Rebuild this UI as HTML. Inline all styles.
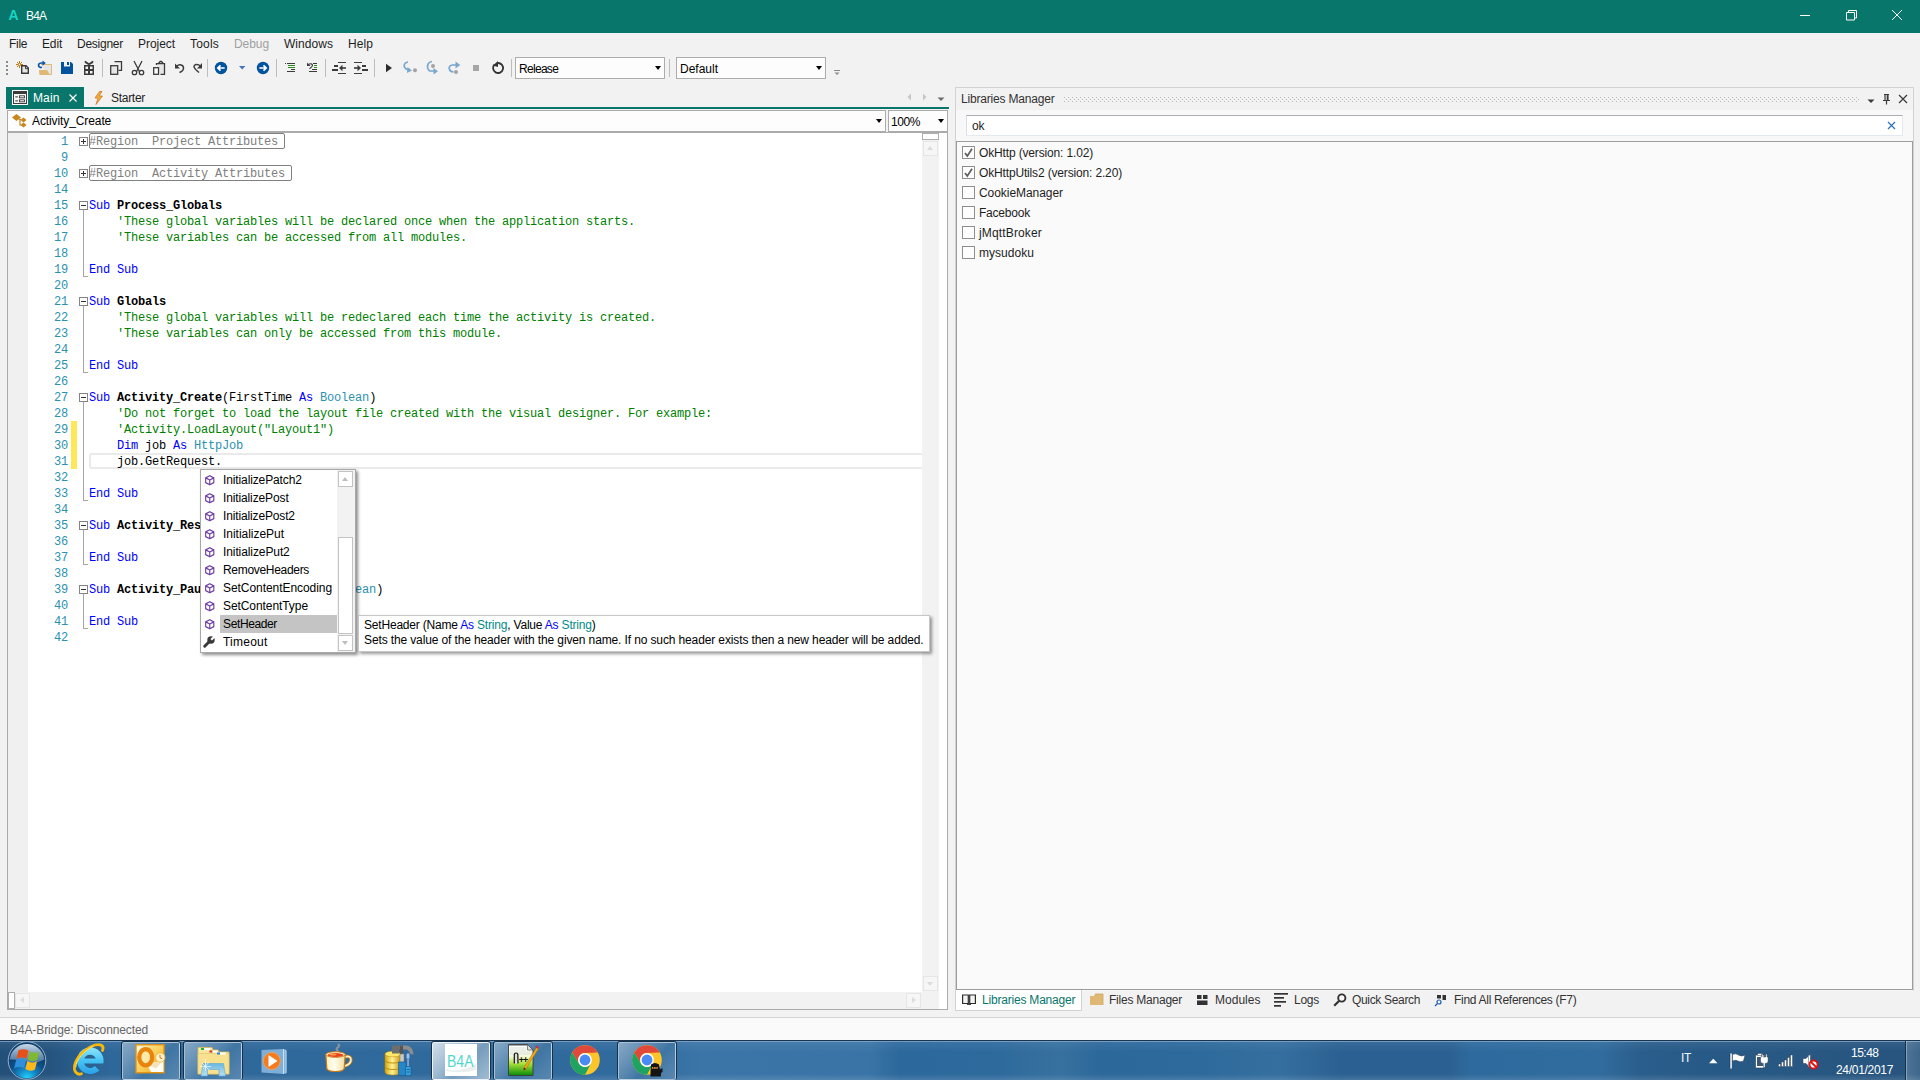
<!DOCTYPE html>
<html lang="en">
<head>
<meta charset="utf-8">
<title>B4A</title>
<style>
*{box-sizing:border-box;margin:0;padding:0}
html,body{width:1920px;height:1080px;overflow:hidden;background:#f2f2f2}
body{position:relative;font-family:"Liberation Sans",sans-serif;font-size:12px;color:#1e1e1e;line-height:1}
.a{position:absolute}
.t{position:absolute;white-space:pre;line-height:16px;height:16px}
svg{position:absolute;overflow:visible}
/* title bar */
#title{left:0;top:0;width:1920px;height:33px;background:#08766a}
/* code */
.code{font-family:"Liberation Mono",monospace;font-size:12px;letter-spacing:-.2px}
.ln{position:absolute;left:28px;width:40px;text-align:right;color:#2b91af;height:16px;line-height:16px;white-space:pre}
.cl{position:absolute;left:89px;height:16px;line-height:16px;white-space:pre;color:#000}
.k{color:#0000ff}.c{color:#008000}.ty{color:#2b91af}.b{font-weight:bold}.g{color:#808080}
.ln,.cl{margin-top:1px}
.fold{position:absolute;left:79px;width:9px;height:9px;border:1px solid #848484;background:#fff}
.fold:before{content:"";position:absolute;left:1px;top:3px;width:5px;height:1px;background:#333}
.fold.p:after{content:"";position:absolute;left:3px;top:1px;width:1px;height:5px;background:#333}
.fl{position:absolute;left:83px;width:1px;background:#a5a5a5}
.fe{position:absolute;left:83px;width:5px;height:1px;background:#a5a5a5}
</style>
</head>
<body>
<!-- TITLE BAR -->
<div id="title" class="a"></div>
<div class="t" style="left:8.500px;top:7px;color:#17d6c4;font-weight:bold;font-size:14px">A</div>
<div class="t" style="left:26px;top:8px;color:#fff;letter-spacing:-.8px">B4A</div>
<svg style="left:1795px;top:5px" width="115" height="22" viewBox="0 0 115 22"><g fill="none" stroke="#fff" stroke-width="1"><path d="M5 10.500h10"/><path d="M51.500 7.500h8v7.500h-8zM53.500 7.500v-2h8v7.500h-2"/><path d="M97 5l10 10M107 5l-10 10"/></g></svg>

<!-- MENU -->
<div id="menu">
<div class="t" style="left:9px;top:36px;letter-spacing:-.3px">File</div>
<div class="t" style="left:42px;top:36px;letter-spacing:-.15px">Edit</div>
<div class="t" style="left:77px;top:36px;letter-spacing:-.25px">Designer</div>
<div class="t" style="left:138px;top:36px;letter-spacing:-.05px">Project</div>
<div class="t" style="left:190px;top:36px;letter-spacing:.2px">Tools</div>
<div class="t" style="left:234px;top:36px;letter-spacing:-.07px;color:#a0a0a0">Debug</div>
<div class="t" style="left:284px;top:36px;letter-spacing:.04px">Windows</div>
<div class="t" style="left:348px;top:36px;letter-spacing:.08px">Help</div>
</div>
<!-- TOOLBAR -->
<div id="toolbar">
<svg class="a" style="left:0;top:54px" width="960" height="30" viewBox="0 0 960 30">
<!-- grip -->
<g fill="#8a8a8a"><rect x="6" y="7" width="2" height="2"/><rect x="6" y="11" width="2" height="2"/><rect x="6" y="15" width="2" height="2"/><rect x="6" y="19" width="2" height="2"/></g>
<!-- separators -->
<g fill="#bdbdbd"><rect x="102" y="5" width="1" height="18"/><rect x="207" y="5" width="1" height="18"/><rect x="276" y="5" width="1" height="18"/><rect x="325" y="5" width="1" height="18"/><rect x="374" y="5" width="1" height="18"/><rect x="511" y="5" width="1" height="18"/><rect x="669" y="5" width="1" height="18"/></g>
<!-- new -->
<g stroke="#c4790f" stroke-width="1" fill="none"><path d="M19.5 7v7M16 10.5h7M17 8l5 5M22 8l-5 5"/></g><circle cx="19.5" cy="10.5" r="1.2" fill="#fff" stroke="#c4790f" stroke-width=".8"/>
<path d="M21.7 11.7h4.3l2.3 2.3v5.3h-6.6z" fill="#e6e6e6" stroke="#3b3b3b" stroke-width="1.4" stroke-linejoin="miter"/><path d="M25.5 11.7v3h3" fill="none" stroke="#3b3b3b" stroke-width="1"/>
<!-- open -->
<path d="M41 10.5h10.5v10h-4" fill="#e6e6e6" stroke="#deb874" stroke-width="1"/><path d="M39 16h8l3 5h-10.5z" fill="#deb874"/>
<path d="M42 13.5c-2.5 0-3.5-1-3.5-2.3c0-1.400 1.200-2.200 3.500-2.200h2" fill="none" stroke="#0a56a3" stroke-width="1.6"/><path d="M42.500 6.500l3.300 2.600l-3.300 2.600z" fill="#0a56a3"/>
<!-- save -->
<path d="M61 8h10l2 2v10h-12z" fill="#00539c"/><rect x="64" y="8" width="6" height="4.500" fill="#f2f2f2"/><rect x="67" y="8" width="2" height="3" fill="#00539c"/>
<!-- gift -->
<g fill="#3b3b3b"><rect x="84" y="11" width="10" height="10"/><path d="M89 11.200l-4-2.200q-1.200-1.500.3-2.200l3.700 2.400l3.700-2.400q1.500.7.300 2.200z"/></g>
<g fill="#f2f2f2"><rect x="85.500" y="12.500" width="2.500" height="2.500"/><rect x="90" y="12.500" width="2.500" height="2.500"/><rect x="85.500" y="17" width="2.500" height="2.500"/><rect x="90" y="17" width="2.500" height="2.500"/></g>
<!-- copy -->
<path d="M114.500 7.700h7v8.600h-3" fill="#f0f0f0" stroke="#3b3b3b" stroke-width="1.300"/><rect x="110.700" y="11.700" width="7" height="8.600" fill="#e6e6e6" stroke="#3b3b3b" stroke-width="1.300"/>
<!-- cut -->
<g fill="none" stroke="#3b3b3b" stroke-width="1.300"><path d="M134 7l5.700 11M142 7l-5.700 11"/><circle cx="134.500" cy="18.500" r="2.200"/><circle cx="141.500" cy="18.500" r="2.200"/></g>
<!-- paste -->
<path d="M156.500 11v-1.300h8v10.600h-4" fill="#e6e6e6" stroke="#3b3b3b" stroke-width="1.300"/><path d="M158.500 9.500l1.700-2h1.300l1.700 2" fill="none" stroke="#3b3b3b" stroke-width="1.300"/><rect x="153.700" y="13.700" width="4.800" height="6.600" fill="#fff" stroke="#3b3b3b" stroke-width="1.300"/>
<!-- undo -->
<path d="M176.500 12.500c3-3 7-1.500 7 1.500c0 2-1.500 3.500-4 4.500" fill="none" stroke="#3b3b3b" stroke-width="1.500"/><path d="M175 9.500v5h5z" fill="#3b3b3b"/>
<!-- redo -->
<path d="M200.500 12c-3-2.500-6.500-1.500-6.500.5c0 2 2.500 4 5 6" fill="none" stroke="#3b3b3b" stroke-width="1.500"/><path d="M202 9v5.500h-5z" fill="#3b3b3b"/>
<!-- back -->
<circle cx="221" cy="14" r="6.200" fill="#00539c"/><path d="M224.700 14h-6M220.500 11.300l-2.700 2.700l2.700 2.700" fill="none" stroke="#fff" stroke-width="1.700"/>
<path d="M239 12h6.400l-3.200 3.400z" fill="#4472c4"/>
<!-- fwd -->
<circle cx="263" cy="14" r="6.200" fill="#00539c"/><path d="M259.300 14h6M263.500 11.300l2.700 2.700l-2.700 2.700" fill="none" stroke="#fff" stroke-width="1.700"/>
<!-- comment -->
<g fill="#3b3b3b"><rect x="285" y="9" width="1" height="1"/><rect x="287" y="9" width="8" height="1"/><rect x="291" y="15" width="4" height="1"/><rect x="287" y="17" width="8" height="1"/></g>
<g fill="#2e8b1e"><rect x="288" y="11" width="7" height="1"/><rect x="288" y="13" width="7" height="1"/></g>
<!-- uncomment -->
<g fill="#3b3b3b"><rect x="313" y="9" width="4" height="1"/><rect x="312" y="15" width="5" height="1"/><rect x="309" y="17" width="8" height="1"/></g>
<g fill="#2e8b1e"><rect x="314" y="11" width="3" height="1"/><rect x="314" y="13" width="3" height="1"/></g>
<path d="M308.500 10.500c2-1.500 4-.5 4 1c0 1.200-1.500 2.200-3 3.300" fill="none" stroke="#3b3b3b" stroke-width="1.100"/><path d="M307 8.500v3.500h3.500z" fill="#3b3b3b"/>
<!-- outdent -->
<g fill="#3b3b3b"><rect x="338" y="8" width="8" height="1"/><rect x="338" y="19" width="8" height="1"/><rect x="334" y="11" width="4" height="2"/><rect x="332" y="15" width="6" height="2"/><rect x="341" y="13.200" width="5" height="1.600"/><path d="M339 14l3.500-3.300v6.600z"/></g>
<!-- indent -->
<g fill="#3b3b3b"><rect x="354" y="8" width="8" height="1"/><rect x="354" y="19" width="8" height="1"/><rect x="362" y="11" width="4" height="2"/><rect x="362" y="15" width="6" height="2"/><rect x="354" y="13.200" width="5" height="1.600"/><path d="M361 14l-3.500-3.300v6.600z"/></g>
<!-- play -->
<path d="M386 9.800l6 4.200l-6 4.200z" fill="#2d2d2d"/>
<!-- step into -->
<path d="M408 8c-4 .5-5 4-2.500 6.500l3 1.500" fill="none" stroke="#7aa7cf" stroke-width="1.700"/><path d="M407.500 13l4.500 3.500l-5 2.500z" fill="#7aa7cf"/><circle cx="415" cy="16.200" r="2" fill="#a3a3a3"/>
<!-- step over -->
<path d="M432 7.500c-5 .5-6 7-2 9.500h4" fill="none" stroke="#7aa7cf" stroke-width="1.700"/><path d="M433.500 14l4.500 3.300l-4.500 3.300z" fill="#7aa7cf"/><circle cx="433" cy="12" r="2" fill="#a3a3a3"/>
<!-- step out -->
<path d="M453.500 18c-5-.5-6-6.500-1-7h4" fill="none" stroke="#7aa7cf" stroke-width="1.700"/><path d="M455.500 7.500l4.800 3.500l-4.800 3.500z" fill="#7aa7cf"/><circle cx="456" cy="18" r="2" fill="#a3a3a3"/>
<!-- stop -->
<rect x="473" y="11" width="6" height="6" fill="#a6a6a6"/>
<!-- restart -->
<path d="M494.500 10.500a5 5 0 1 0 3.500-1.500" fill="none" stroke="#333" stroke-width="1.800"/><path d="M493 11.500l5-4.500v6z" fill="#333"/>
<!-- overflow -->
<g fill="#8a8a8a"><rect x="834" y="16" width="6" height="1"/><path d="M834.500 18.500h5l-2.500 2.500z"/></g>
</svg>
<!-- combos -->
<div class="a" style="left:515px;top:57px;width:150px;height:22px;border:1px solid #adadad;background:#fdfdfd"></div>
<div class="t" style="left:519px;top:61px;letter-spacing:-.7px;color:#000">Release</div>
<div class="a" style="left:655px;top:66px;border:3.500px solid transparent;border-top:4px solid #000;border-bottom:0"></div>
<div class="a" style="left:676px;top:57px;width:150px;height:22px;border:1px solid #adadad;background:#fdfdfd"></div>
<div class="t" style="left:680px;top:61px;letter-spacing:0;color:#000">Default</div>
<div class="a" style="left:816px;top:66px;border:3.500px solid transparent;border-top:4px solid #000;border-bottom:0"></div>
</div>
<!-- DOC TABS -->
<div id="tabs">
<div class="a" style="left:6px;top:87px;width:78px;height:22px;background:#08766a"></div>
<div class="a" style="left:6px;top:107px;width:943px;height:2px;background:#08766a"></div>
<svg style="left:12px;top:90px" width="16" height="15" viewBox="0 0 16 15"><rect x="0" y="0" width="16" height="15" fill="#fff"/><rect x="1.500" y="1.500" width="13" height="12" fill="#f7f7f7" stroke="#3b3b3b" stroke-width="1"/><rect x="1" y="1" width="14" height="3" fill="#3b3b3b"/><g fill="#fff" stroke="#3b3b3b" stroke-width=".9"><rect x="7.500" y="5.800" width="5" height="2"/><rect x="7.500" y="9.800" width="5" height="2"/></g><rect x="3.300" y="6.300" width="2.500" height="1.100" fill="#3b3b3b"/><rect x="3.300" y="10.300" width="2.500" height="1.100" fill="#3b3b3b"/></svg>
<div class="t" style="left:33px;top:90px;color:#fff;letter-spacing:.12px">Main</div>
<svg style="left:69px;top:94px" width="8" height="8" viewBox="0 0 8 8"><path d="M.5.5l7 7M7.500.5l-7 7" stroke="#fff" stroke-width="1.200" fill="none"/></svg>
<svg style="left:93px;top:91px" width="11" height="14" viewBox="0 0 11 14"><path d="M6.500.5L2 7h3L3 13.500L9.500 5H6L9 .5z" fill="#f2b33a" stroke="#d0671f" stroke-width=".7" stroke-linejoin="round"/></svg>
<div class="t" style="left:111px;top:90px;color:#1e1e1e;letter-spacing:-.29px">Starter</div>
<svg style="left:905px;top:92px" width="42" height="10" viewBox="0 0 42 10"><path d="M6 1.500v7L2.500 5z" fill="#c6c6c6"/><path d="M18 1.500v7L21.500 5z" fill="#c6c6c6"/><path d="M32.500 5.500h7L36 9z" fill="#6d6d6d"/></svg>
<!-- member combo -->
<div class="a" style="left:7px;top:110px;width:879px;height:22px;border:1px solid #ababab;background:#fdfdfd"></div>
<svg style="left:12px;top:114px" width="15" height="15" viewBox="0 0 15 15"><g fill="#c8861b"><path d="M4.500 0L9 3.500L4.500 7L0 3.500z"/><path d="M11.500 3.500L14.500 6L11.500 8.500L8.500 6z"/><path d="M11.500 8.500L14.500 11L11.500 13.500L8.500 11z"/></g><path d="M7 5.500h2M8 6v5h1.500" fill="none" stroke="#c8861b" stroke-width="1.200"/></svg>
<div class="t" style="left:32px;top:113px;color:#000;letter-spacing:-.1px">Activity_Create</div>
<div class="a" style="left:876px;top:119px;border:3.500px solid transparent;border-top:4px solid #000;border-bottom:0"></div>
<div class="a" style="left:888px;top:110px;width:60px;height:22px;border:1px solid #ababab;background:#fdfdfd"></div>
<div class="t" style="left:891px;top:114px;color:#000;letter-spacing:-.42px">100%</div>
<div class="a" style="left:938px;top:119px;border:3.500px solid transparent;border-top:4px solid #000;border-bottom:0"></div>
</div>
<!-- EDITOR -->
<div id="editor">
<div class="a" style="left:7px;top:132px;width:941px;height:878px;border:1px solid #ababab;background:#fff"></div>
<div class="a" style="left:8px;top:133px;width:20px;height:859px;background:#f0f0f0"></div>
<div class="a" style="left:922px;top:133px;width:17px;height:859px;background:#f2f2f2"></div>
<div class="a" style="left:8px;top:992px;width:931px;height:17px;background:#f2f2f2"></div>
<div class="a" style="left:922px;top:133px;width:17px;height:7px;background:#fff;border:1px solid #adadad"></div>
<div class="a" style="left:923px;top:141px;width:15px;height:15px;background:#f6f6f6;border:1px solid #e6e6e6"></div>
<div class="a" style="left:927px;top:146px;border:3.500px solid transparent;border-bottom:4px solid #dcdcdc;border-top:0"></div>
<div class="a" style="left:923px;top:976px;width:15px;height:15px;background:#f6f6f6;border:1px solid #e6e6e6"></div>
<div class="a" style="left:927px;top:982px;border:3.500px solid transparent;border-top:4px solid #dcdcdc;border-bottom:0"></div>
<div class="a" style="left:8px;top:992px;width:7px;height:17px;background:#fff;border:1px solid #adadad"></div>
<div class="a" style="left:15px;top:993px;width:15px;height:15px;background:#f6f6f6;border:1px solid #e6e6e6"></div>
<div class="a" style="left:20px;top:997px;border:3.500px solid transparent;border-right:4px solid #dcdcdc;border-left:0"></div>
<div class="a" style="left:906px;top:993px;width:15px;height:15px;background:#f6f6f6;border:1px solid #e6e6e6"></div>
<div class="a" style="left:912px;top:997px;border:3.500px solid transparent;border-left:4px solid #dcdcdc;border-right:0"></div>
<div class="a" style="left:71px;top:421px;width:6px;height:48px;background:#ffe75a"></div>
<div class="a" style="left:89px;top:453px;width:833px;height:16px;border:2px solid #eaeaea;border-right:0;border-radius:3px 0 0 3px"></div>
<div class="a" style="left:89px;top:133px;width:196px;height:16px;border:1px solid #808080;border-radius:2px"></div>
<div class="a" style="left:89px;top:165px;width:203px;height:16px;border:1px solid #808080;border-radius:2px"></div>
<div class="code">
<div class="ln" style="top:133px">1</div>
<div class="cl" style="top:133px"><span class="g">#Region  Project Attributes</span></div>
<div class="fold p" style="top:137px"></div>
<div class="ln" style="top:149px">9</div>
<div class="ln" style="top:165px">10</div>
<div class="cl" style="top:165px"><span class="g">#Region  Activity Attributes</span></div>
<div class="fold p" style="top:169px"></div>
<div class="ln" style="top:181px">14</div>
<div class="ln" style="top:197px">15</div>
<div class="cl" style="top:197px"><span class="k">Sub</span> <span class="b">Process_Globals</span></div>
<div class="fold" style="top:201px"></div>
<div class="ln" style="top:213px">16</div>
<div class="cl" style="top:213px">    <span class="c">'These global variables will be declared once when the application starts.</span></div>
<div class="ln" style="top:229px">17</div>
<div class="cl" style="top:229px">    <span class="c">'These variables can be accessed from all modules.</span></div>
<div class="ln" style="top:245px">18</div>
<div class="ln" style="top:261px">19</div>
<div class="cl" style="top:261px"><span class="k">End Sub</span></div>
<div class="fl" style="top:210px;height:66px"></div>
<div class="fe" style="top:276px"></div>
<div class="ln" style="top:277px">20</div>
<div class="ln" style="top:293px">21</div>
<div class="cl" style="top:293px"><span class="k">Sub</span> <span class="b">Globals</span></div>
<div class="fold" style="top:297px"></div>
<div class="ln" style="top:309px">22</div>
<div class="cl" style="top:309px">    <span class="c">'These global variables will be redeclared each time the activity is created.</span></div>
<div class="ln" style="top:325px">23</div>
<div class="cl" style="top:325px">    <span class="c">'These variables can only be accessed from this module.</span></div>
<div class="ln" style="top:341px">24</div>
<div class="ln" style="top:357px">25</div>
<div class="cl" style="top:357px"><span class="k">End Sub</span></div>
<div class="fl" style="top:306px;height:66px"></div>
<div class="fe" style="top:372px"></div>
<div class="ln" style="top:373px">26</div>
<div class="ln" style="top:389px">27</div>
<div class="cl" style="top:389px"><span class="k">Sub</span> <span class="b">Activity_Create</span>(FirstTime <span class="k">As</span> <span class="ty">Boolean</span>)</div>
<div class="fold" style="top:393px"></div>
<div class="ln" style="top:405px">28</div>
<div class="cl" style="top:405px">    <span class="c">'Do not forget to load the layout file created with the visual designer. For example:</span></div>
<div class="ln" style="top:421px">29</div>
<div class="cl" style="top:421px">    <span class="c">'Activity.LoadLayout("Layout1")</span></div>
<div class="ln" style="top:437px">30</div>
<div class="cl" style="top:437px">    <span class="k">Dim</span> job <span class="k">As</span> <span class="ty">HttpJob</span></div>
<div class="ln" style="top:453px">31</div>
<div class="cl" style="top:453px">    job.GetRequest.</div>
<div class="ln" style="top:469px">32</div>
<div class="ln" style="top:485px">33</div>
<div class="cl" style="top:485px"><span class="k">End Sub</span></div>
<div class="fl" style="top:402px;height:98px"></div>
<div class="fe" style="top:500px"></div>
<div class="ln" style="top:501px">34</div>
<div class="ln" style="top:517px">35</div>
<div class="cl" style="top:517px"><span class="k">Sub</span> <span class="b">Activity_Resume</span></div>
<div class="fold" style="top:521px"></div>
<div class="ln" style="top:533px">36</div>
<div class="ln" style="top:549px">37</div>
<div class="cl" style="top:549px"><span class="k">End Sub</span></div>
<div class="fl" style="top:530px;height:34px"></div>
<div class="fe" style="top:564px"></div>
<div class="ln" style="top:565px">38</div>
<div class="ln" style="top:581px">39</div>
<div class="cl" style="top:581px"><span class="k">Sub</span> <span class="b">Activity_Pause</span> (UserClosed <span class="k">As</span> <span class="ty">Boolean</span>)</div>
<div class="fold" style="top:585px"></div>
<div class="ln" style="top:597px">40</div>
<div class="ln" style="top:613px">41</div>
<div class="cl" style="top:613px"><span class="k">End Sub</span></div>
<div class="fl" style="top:594px;height:34px"></div>
<div class="fe" style="top:628px"></div>
<div class="ln" style="top:629px">42</div>
</div>
</div>
<div id="popup">
<div class="a" style="left:200px;top:469px;width:156px;height:184px;background:#fff;border:1px solid #a8a8a8;box-shadow:2px 2px 3px rgba(0,0,0,.45)"></div>
<svg style="left:204.500px;top:474.5px" width="9.500" height="10.500" viewBox="0 0 10 11"><path d="M5 .7L9.300 3v5L5 10.300L.7 8V3z M.7 3L5 5.300L9.300 3M5 5.300v5" fill="none" stroke="#6f3fa5" stroke-width="1.200" stroke-linejoin="round"/></svg>
<div class="t" style="left:223px;top:472px;color:#000;letter-spacing:-0.12px">InitializePatch2</div>
<svg style="left:204.500px;top:492.5px" width="9.500" height="10.500" viewBox="0 0 10 11"><path d="M5 .7L9.300 3v5L5 10.300L.7 8V3z M.7 3L5 5.300L9.300 3M5 5.300v5" fill="none" stroke="#6f3fa5" stroke-width="1.200" stroke-linejoin="round"/></svg>
<div class="t" style="left:223px;top:490px;color:#000;letter-spacing:-0.127px">InitializePost</div>
<svg style="left:204.500px;top:510.5px" width="9.500" height="10.500" viewBox="0 0 10 11"><path d="M5 .7L9.300 3v5L5 10.300L.7 8V3z M.7 3L5 5.300L9.300 3M5 5.300v5" fill="none" stroke="#6f3fa5" stroke-width="1.200" stroke-linejoin="round"/></svg>
<div class="t" style="left:223px;top:508px;color:#000;letter-spacing:-0.143px">InitializePost2</div>
<svg style="left:204.500px;top:528.5px" width="9.500" height="10.500" viewBox="0 0 10 11"><path d="M5 .7L9.300 3v5L5 10.300L.7 8V3z M.7 3L5 5.300L9.300 3M5 5.300v5" fill="none" stroke="#6f3fa5" stroke-width="1.200" stroke-linejoin="round"/></svg>
<div class="t" style="left:223px;top:526px;color:#000;letter-spacing:-0.03px">InitializePut</div>
<svg style="left:204.500px;top:546.5px" width="9.500" height="10.500" viewBox="0 0 10 11"><path d="M5 .7L9.300 3v5L5 10.300L.7 8V3z M.7 3L5 5.300L9.300 3M5 5.300v5" fill="none" stroke="#6f3fa5" stroke-width="1.200" stroke-linejoin="round"/></svg>
<div class="t" style="left:223px;top:544px;color:#000;letter-spacing:-0.096px">InitializePut2</div>
<svg style="left:204.500px;top:564.5px" width="9.500" height="10.500" viewBox="0 0 10 11"><path d="M5 .7L9.300 3v5L5 10.300L.7 8V3z M.7 3L5 5.300L9.300 3M5 5.300v5" fill="none" stroke="#6f3fa5" stroke-width="1.200" stroke-linejoin="round"/></svg>
<div class="t" style="left:223px;top:562px;color:#000;letter-spacing:-0.31px">RemoveHeaders</div>
<svg style="left:204.500px;top:582.5px" width="9.500" height="10.500" viewBox="0 0 10 11"><path d="M5 .7L9.300 3v5L5 10.300L.7 8V3z M.7 3L5 5.300L9.300 3M5 5.300v5" fill="none" stroke="#6f3fa5" stroke-width="1.200" stroke-linejoin="round"/></svg>
<div class="t" style="left:223px;top:580px;color:#000;letter-spacing:-0.06px">SetContentEncoding</div>
<svg style="left:204.500px;top:600.5px" width="9.500" height="10.500" viewBox="0 0 10 11"><path d="M5 .7L9.300 3v5L5 10.300L.7 8V3z M.7 3L5 5.300L9.300 3M5 5.300v5" fill="none" stroke="#6f3fa5" stroke-width="1.200" stroke-linejoin="round"/></svg>
<div class="t" style="left:223px;top:598px;color:#000;letter-spacing:-0.076px">SetContentType</div>
<div class="a" style="left:220px;top:615px;width:117px;height:18px;background:#c4c4c4"></div>
<svg style="left:204.500px;top:618.5px" width="9.500" height="10.500" viewBox="0 0 10 11"><path d="M5 .7L9.300 3v5L5 10.300L.7 8V3z M.7 3L5 5.300L9.300 3M5 5.300v5" fill="none" stroke="#6f3fa5" stroke-width="1.200" stroke-linejoin="round"/></svg>
<div class="t" style="left:223px;top:616px;color:#000;letter-spacing:-0.375px">SetHeader</div>
<svg style="left:203px;top:636px" width="12" height="12" viewBox="0 0 12 12"><path d="M1.700 10.300L7 5" stroke="#3a3a3a" stroke-width="2.900" fill="none" stroke-linecap="round"/><circle cx="8" cy="4" r="3.700" fill="#3a3a3a"/><path d="M8.980 4.580L12.520 1.040L10.960-.520L7.420 3.020z" fill="#fff"/></svg>
<div class="t" style="left:223px;top:634px;color:#000;letter-spacing:0.24px">Timeout</div>
<div class="a" style="left:337px;top:470px;width:18px;height:182px;background:#f2f2f2"></div>
<div class="a" style="left:338px;top:471px;width:15px;height:16px;background:#fff;border:1px solid #c3c3c3"></div>
<div class="a" style="left:342px;top:477px;border:3.500px solid transparent;border-bottom:4px solid #bdbdbd;border-top:0"></div>
<div class="a" style="left:338px;top:537px;width:15px;height:97px;background:#fff;border:1px solid #c3c3c3"></div>
<div class="a" style="left:338px;top:635px;width:15px;height:16px;background:#fff;border:1px solid #c3c3c3"></div>
<div class="a" style="left:342px;top:641px;border:3.500px solid transparent;border-top:4px solid #bdbdbd;border-bottom:0"></div>
<div class="a" style="left:358px;top:615px;width:572px;height:37px;background:#fff;border:1px solid #c6c6c6;box-shadow:2px 2px 3px rgba(0,0,0,.4)"></div>
<div class="t" style="left:364px;top:617px;color:#000;letter-spacing:-.195px">SetHeader (Name <span style="color:#0000ff">As</span> <span style="color:#008b8b">String</span>, Value <span style="color:#0000ff">As</span> <span style="color:#008b8b">String</span>)</div>
<div class="t" style="left:364px;top:632px;color:#000;letter-spacing:-.126px">Sets the value of the header with the given name. If no such header exists then a new header will be added.</div>
</div>
<!-- RIGHT PANEL -->
<div id="rpanel">
<div class="a" style="left:955px;top:87px;width:959px;height:904px;border:1px solid #d2d2d2;border-bottom:0;background:#f8f8f8"></div>
<div class="a" style="left:956px;top:88px;width:957px;height:22px;background:#f2f2f2"></div>
<div class="a" style="left:956px;top:1010px;width:958px;height:8px;background:#f2f2f2"></div>
<div class="t" style="left:961px;top:91px;color:#333;letter-spacing:-.19px">Libraries Manager</div>
<svg style="left:1064px;top:97px" width="796" height="5" viewBox="0 0 796 5"><defs><pattern id="dots" width="4" height="4" patternUnits="userSpaceOnUse"><rect x="0" y="0" width="1" height="1" fill="#b9b9b9"/><rect x="2" y="2" width="1" height="1" fill="#b9b9b9"/></pattern></defs><rect width="796" height="5" fill="url(#dots)"/></svg>
<svg style="left:1866px;top:92px" width="44" height="14" viewBox="0 0 44 14"><path d="M1.500 7.500h7L5 11z" fill="#3b3b3b"/><g fill="none" stroke="#3b3b3b" stroke-width="1.200"><path d="M18 2.500h5M19 2.500v5.500M22 2.500v5.500M21.300 2.500v5.500M17 8.500h7M20.500 8.500v4"/><path d="M33 3l8 8M41 3l-8 8"/></g></svg>
<div class="a" style="left:966px;top:115px;width:937px;height:21px;background:#fff;border:1px solid #e3e9ef;border-top-color:#abadb3;border-left-color:#dadde3"></div>
<div class="t" style="left:972px;top:118px;color:#1e1e1e;letter-spacing:-.1px">ok</div>
<svg style="left:1887px;top:121px" width="9" height="9" viewBox="0 0 9 9"><path d="M1 1l7 7M8 1l-7 7" stroke="#2f6fc0" stroke-width="1.200" fill="none"/></svg>
<div class="a" style="left:956px;top:141px;width:957px;height:849px;background:#fafafa;border:1px solid #9c9c9c"></div>
<div class="a" style="left:962px;top:146px;width:13px;height:13px;border:1px solid #8e8f8f;background:#fdfdfd"></div>
<svg style="left:964px;top:148px" width="9" height="9" viewBox="0 0 9 9"><path d="M1 5l2.300 3L8 .8" fill="none" stroke="#5f5f5f" stroke-width="1.700"/></svg>
<div class="t" style="left:979px;top:145px;color:#1e1e1e;letter-spacing:-0.15px">OkHttp (version: 1.02)</div>
<div class="a" style="left:962px;top:166px;width:13px;height:13px;border:1px solid #8e8f8f;background:#fdfdfd"></div>
<svg style="left:964px;top:168px" width="9" height="9" viewBox="0 0 9 9"><path d="M1 5l2.300 3L8 .8" fill="none" stroke="#5f5f5f" stroke-width="1.700"/></svg>
<div class="t" style="left:979px;top:165px;color:#1e1e1e;letter-spacing:-0.157px">OkHttpUtils2 (version: 2.20)</div>
<div class="a" style="left:962px;top:186px;width:13px;height:13px;border:1px solid #8e8f8f;background:#fdfdfd"></div>
<div class="t" style="left:979px;top:185px;color:#1e1e1e;letter-spacing:-0.055px">CookieManager</div>
<div class="a" style="left:962px;top:206px;width:13px;height:13px;border:1px solid #8e8f8f;background:#fdfdfd"></div>
<div class="t" style="left:979px;top:205px;color:#1e1e1e;letter-spacing:-0.21px">Facebook</div>
<div class="a" style="left:962px;top:226px;width:13px;height:13px;border:1px solid #8e8f8f;background:#fdfdfd"></div>
<div class="t" style="left:979px;top:225px;color:#1e1e1e;letter-spacing:0.149px">jMqttBroker</div>
<div class="a" style="left:962px;top:246px;width:13px;height:13px;border:1px solid #8e8f8f;background:#fdfdfd"></div>
<div class="t" style="left:979px;top:245px;color:#1e1e1e;letter-spacing:0.037px">mysudoku</div>
<div class="a" style="left:955px;top:990px;width:127px;height:21px;background:#fff;border:1px solid #d2d2d2;border-top:0"></div>
<svg style="left:962px;top:994px" width="14" height="11" viewBox="0 0 14 11"><path d="M.6 1h5.700v8.500H.6zM7.700 1h5.700v8.500H7.700z" fill="#f4f4f4" stroke="#2d2d2d" stroke-width="1.200"/><path d="M5 10.300h4" stroke="#2d2d2d" stroke-width="1.200"/></svg>
<div class="t" style="left:982px;top:992px;color:#08766a;letter-spacing:-.2px">Libraries Manager</div>
<svg style="left:1090px;top:994px" width="13" height="11" viewBox="0 0 13 11"><path d="M0 2h4l1-2h8v11H0z" fill="#deb874"/><path d="M5 0h8v11" fill="none" stroke="#cfa65e" stroke-width=".8"/></svg>
<div class="t" style="left:1109px;top:992px;color:#333;letter-spacing:-.23px">Files Manager</div>
<svg style="left:1197px;top:995px" width="11" height="10" viewBox="0 0 11 10"><g fill="#333"><rect x="0" y="0" width="4.500" height="4"/><rect x="6" y="0" width="4.500" height="4"/><rect x="0" y="5.500" width="10.500" height="4.500"/></g></svg>
<div class="t" style="left:1215px;top:992px;color:#333;letter-spacing:.02px">Modules</div>
<svg style="left:1274px;top:993px" width="14" height="14" viewBox="0 0 14 14"><g fill="#333"><rect x="0" y="0" width="14" height="1.700"/><rect x="0" y="4" width="10" height="1.700"/><rect x="0" y="8" width="12" height="1.700"/><rect x="0" y="12" width="7" height="1.700"/></g></svg>
<div class="t" style="left:1294px;top:992px;color:#333;letter-spacing:-.25px">Logs</div>
<svg style="left:1333px;top:993px" width="14" height="14" viewBox="0 0 14 14"><circle cx="8.800" cy="5" r="3.600" fill="#f8f8f8" stroke="#333" stroke-width="1.900"/><path d="M6 8L1.200 12.800" stroke="#333" stroke-width="2.200" fill="none"/></svg>
<div class="t" style="left:1352px;top:992px;color:#333;letter-spacing:-.33px">Quick Search</div>
<svg style="left:1434px;top:994px" width="13" height="13" viewBox="0 0 13 13"><g fill="#333"><rect x="3" y="1" width="4" height="3.500"/><rect x="8.500" y="1" width="3.500" height="5"/></g><circle cx="5" cy="8" r="2" fill="none" stroke="#1d5fae" stroke-width="1.200"/><path d="M3.500 9.500L1 12" stroke="#1d5fae" stroke-width="1.300"/></svg>
<div class="t" style="left:1454px;top:992px;color:#333;letter-spacing:-.29px">Find All References (F7)</div>
</div>
<!-- STATUS -->
<div id="status">
<div class="a" style="left:0;top:1017px;width:1920px;height:1px;background:#d6d6d6"></div>
<div class="a" style="left:0;top:1018px;width:1920px;height:22px;background:#fafafa"></div>
<div class="t" style="left:10px;top:1022px;color:#666;letter-spacing:-.11px">B4A-Bridge: Disconnected</div>
</div>
<!-- TASKBAR -->
<div id="taskbar">
<div class="a" style="left:0;top:1040px;width:1920px;height:40px;background:linear-gradient(90deg,#23507a 0,#25547f 50px,#2e6799 110px,#316b9e 640px,#3b75a7 700px,#3a74a6 870px,#2d689c 900px,#2f6a9d 1000px,#37719f 1060px,#2d689b 1100px,#2e6a9c 1200px,#356f9f 1280px,#2b6192 1340px,#2b6192 1450px,#2e6a9d 1470px,#316c9e 1600px,#2a5e8c 1640px,#285a87 1700px,#27557f 1900px)"></div>
<div class="a" style="left:0;top:1040px;width:1920px;height:40px;background:linear-gradient(180deg,#1a3550 0,#1a3550 1px,rgba(140,175,210,.75) 1px,rgba(140,175,210,.75) 2px,rgba(255,255,255,.06) 2px,rgba(255,255,255,0) 12px,rgba(255,255,255,0) 34px,rgba(255,255,255,.12) 40px)"></div>
<div class="a" style="left:121px;top:1041px;width:60px;height:39px;border-radius:3px;background:#16304a"></div><div class="a" style="left:122px;top:1042px;width:58px;height:38px;border-radius:2px;border:1px solid rgba(255,255,255,.5);background:linear-gradient(135deg,rgba(255,255,255,.42) 0,rgba(255,255,255,.2) 40%,rgba(255,255,255,.08) 58%,rgba(255,255,255,.2) 100%),#2f6a9c"></div>
<div class="a" style="left:183px;top:1041px;width:60px;height:39px;border-radius:3px;background:#16304a"></div><div class="a" style="left:184px;top:1042px;width:58px;height:38px;border-radius:2px;border:1px solid rgba(255,255,255,.5);background:linear-gradient(135deg,rgba(255,255,255,.42) 0,rgba(255,255,255,.2) 40%,rgba(255,255,255,.08) 58%,rgba(255,255,255,.2) 100%),#2f6a9c"></div>
<div class="a" style="left:431px;top:1041px;width:60px;height:39px;border-radius:3px;background:#16304a"></div><div class="a" style="left:432px;top:1042px;width:58px;height:38px;border-radius:2px;border:1px solid rgba(255,255,255,.85);background:linear-gradient(135deg,rgba(255,255,255,.78) 0,rgba(255,255,255,.52) 40%,rgba(255,255,255,.34) 58%,rgba(255,255,255,.55) 100%),#2f6a9c"></div>
<div class="a" style="left:493px;top:1041px;width:60px;height:39px;border-radius:3px;background:#16304a"></div><div class="a" style="left:494px;top:1042px;width:58px;height:38px;border-radius:2px;border:1px solid rgba(255,255,255,.5);background:linear-gradient(135deg,rgba(255,255,255,.42) 0,rgba(255,255,255,.2) 40%,rgba(255,255,255,.08) 58%,rgba(255,255,255,.2) 100%),#2f6a9c"></div>
<div class="a" style="left:617px;top:1041px;width:60px;height:39px;border-radius:3px;background:#16304a"></div><div class="a" style="left:618px;top:1042px;width:58px;height:38px;border-radius:2px;border:1px solid rgba(255,255,255,.5);background:linear-gradient(135deg,rgba(255,255,255,.42) 0,rgba(255,255,255,.2) 40%,rgba(255,255,255,.08) 58%,rgba(255,255,255,.2) 100%),#2f6a9c"></div>
<svg style="left:0;top:1040px" width="700" height="40" viewBox="0 0 700 40">
<defs>
<radialGradient id="orb" cx="50%" cy="100%" r="75%"><stop offset="0" stop-color="#22d8ff"/><stop offset=".35" stop-color="#1487c8"/><stop offset=".7" stop-color="#0d4f86"/><stop offset="1" stop-color="#0b3f6e"/></radialGradient>
<linearGradient id="orbhi" x1="0" y1="0" x2="0" y2="1"><stop offset="0" stop-color="#d6e2ee" stop-opacity=".95"/><stop offset="1" stop-color="#7fa4c6" stop-opacity=".55"/></linearGradient>
<linearGradient id="ie" x1="0" y1="0" x2="0" y2="1"><stop offset="0" stop-color="#8fe6ff"/><stop offset=".5" stop-color="#46c3f5"/><stop offset="1" stop-color="#2aa0e6"/></linearGradient>
<linearGradient id="ol" x1="0" y1="0" x2="1" y2="1"><stop offset="0" stop-color="#fff3c2"/><stop offset=".5" stop-color="#f8cf5a"/><stop offset="1" stop-color="#f0a41a"/></linearGradient>
<linearGradient id="fold" x1="0" y1="0" x2="0" y2="1"><stop offset="0" stop-color="#fbeaa6"/><stop offset="1" stop-color="#efcf72"/></linearGradient>
<linearGradient id="stand" x1="0" y1="0" x2="0" y2="1"><stop offset="0" stop-color="#5fb4e8"/><stop offset="1" stop-color="#b8e2f8"/></linearGradient>
<linearGradient id="npp" x1="0" y1="0" x2="0" y2="1"><stop offset="0" stop-color="#ffffff"/><stop offset=".38" stop-color="#f4f9dc"/><stop offset=".62" stop-color="#a6e03a"/><stop offset="1" stop-color="#078a08"/></linearGradient>
<linearGradient id="gold" x1="0" y1="0" x2="1" y2="0"><stop offset="0" stop-color="#d9a400"/><stop offset=".45" stop-color="#fff29a"/><stop offset="1" stop-color="#c89200"/></linearGradient>
<linearGradient id="cup" x1="0" y1="0" x2="1" y2="0"><stop offset="0" stop-color="#fbeeb8"/><stop offset=".45" stop-color="#fffdf0"/><stop offset="1" stop-color="#f2dc98"/></linearGradient>
</defs>
<!-- start orb -->
<circle cx="27" cy="20.500" r="18.800" fill="#1d4a78" stroke="#a9c0d8" stroke-opacity=".85" stroke-width="1"/>
<circle cx="27" cy="20.500" r="17.800" fill="url(#orb)"/>
<path d="M9.700 19.500a17.400 17.400 0 0 1 34.600 0q-8 4.500-17.300 2q-8.500-2.500-17.300-2z" fill="url(#orbhi)"/>
<path d="M18.500 10.300q5-2.300 10 .3l-2 8q-5-2.300-10 .2z" fill="#e8501a"/>
<path d="M29.600 11.300q4.800 2.700 9.700.2l-2 8.300q-4.900 2.600-9.700-.4z" fill="#7fb832"/>
<path d="M16.200 19.800q5-2.300 10 .2l-2 8.100q-5-2.300-10 .2z" fill="#2f8fdc"/>
<path d="M27.300 21q4.800 2.900 9.700.3l-2 8.200q-4.900 2.700-9.700-.4z" fill="#fdb81c"/>
<!-- IE -->
<path fill-rule="evenodd" d="M103.300 23.500A13.300 13.300 0 1 0 99.400 30.400L94.800 26A6.300 6.300 0 0 1 84.200 23.500zM84.200 18.500A6.300 6.300 0 0 1 95.800 18.500z" fill="url(#ie)"/>
<path d="M81.500 33.800c-4 1.500-9.500-2-6-11.300c3-8 11-15 19.500-17.500c6-1.500 9.500 1 7.500 5.500" fill="none" stroke="#f6b90a" stroke-width="2.800" stroke-linecap="round"/>
<path d="M75.800 27c0-7 8-16 17-20.500" fill="none" stroke="#ffe36a" stroke-width="1" stroke-linecap="round"/>
<!-- Outlook -->
<rect x="136" y="4.800" width="28" height="28" fill="url(#ol)" stroke="#e8900a" stroke-width="1.300"/>
<path d="M137 6.500h12l-12 17z" fill="#fff" fill-opacity=".55"/>
<path d="M147 24.500l16.500-4.500v12h-12.500z" fill="#fffdf6"/><path d="M147 24.500l16.500-4.500l-7.500 8.500z" fill="#f3e3bc"/>
<ellipse cx="145.700" cy="17.200" rx="6.500" ry="8.100" fill="#fde9a8" stroke="#e8830c" stroke-width="4.300"/>
<circle cx="160.300" cy="17.500" r="4.600" fill="#fff4d0" stroke="#f3b53a" stroke-width=".8"/><path d="M160 14.800v3l2.300 1" fill="none" stroke="#e06a10" stroke-width="1"/>
<!-- Explorer folder -->
<path d="M198 7.500h14l1 2.500h5l1 2h10v22h-31z" fill="url(#fold)" stroke="#d9b85a" stroke-width=".8"/>
<path d="M198 13.500h31v20.500h-31z" fill="#f7e08e" stroke="#e2c468" stroke-width=".6"/>
<rect x="201" y="8" width="3" height="2" fill="#1eb52e"/><rect x="204" y="8" width="6" height="2" fill="#fff"/>
<rect x="209.500" y="10.500" width="3" height="2" fill="#d8281e"/><rect x="212.500" y="10.500" width="5" height="2" fill="#fff"/>
<rect x="217" y="12.500" width="3" height="2" fill="#1e8ae8"/><rect x="220" y="12.500" width="6" height="2" fill="#fff"/>
<path d="M203 23.500h20.500l2 12.500h-6.500v-6.500h-11.500v6.500h-6.500z" fill="url(#stand)" fill-opacity=".92" stroke="#5aa9dc" stroke-width=".6"/>
<path d="M205.500 19v12M200 26.500h11M202 23l7 7M209 22l-6 7" stroke="#fff" stroke-width=".7" stroke-opacity=".9"/>
<!-- WMP -->
<path d="M261.500 10l22-1l3.500 1.500v22.500l-3.500 1l-22-1.500z" fill="#8dbbe0" fill-opacity=".85"/><path d="M283.500 9v25" stroke="#c6e0f4" stroke-width="1"/><path d="M285.200 9.500v24" stroke="#b0d2ee" stroke-width=".8"/>
<circle cx="271.800" cy="21" r="8.500" fill="#f47b1e"/><circle cx="271.800" cy="21" r="8.500" fill="none" stroke="#f9a65a" stroke-width=".8"/>
<path d="M268.500 15l9 6l-9 6z" fill="#fff"/>
<!-- Java cup -->
<path d="M338.500 4.500c2.500 2.500-3.500 3-1.500 5.500s-1 2-1.500 3" fill="none" stroke="#8792a0" stroke-width="2.300" stroke-linecap="round"/>
<path d="M344.500 17c8-3 9 6 .5 9" fill="none" stroke="#c87a1a" stroke-width="3.400"/><path d="M344.500 17c8-3 9 6 .5 9" fill="none" stroke="#fdf6d6" stroke-width="1.600"/>
<path d="M325.800 14.500h19.400l-1 14q-1 3-8.700 3t-8.700-3z" fill="url(#cup)" stroke="#c87a1a" stroke-width="1.200"/>
<ellipse cx="335.500" cy="14.500" rx="9.700" ry="2.800" fill="#fdf0c0" stroke="#c87a1a" stroke-width="1"/>
<ellipse cx="335.500" cy="15" rx="7.800" ry="1.900" fill="#e8401a"/><ellipse cx="333" cy="14.600" rx="3.500" ry="1" fill="#f6a04a"/>
<!-- DB tools -->
<g stroke="#b88a00" stroke-width=".5"><path d="M385 14v18q0 3 8 3t8-3v-18z" fill="url(#gold)"/><ellipse cx="393" cy="14" rx="8" ry="2.800" fill="#ffe96a"/></g>
<path d="M385 20q0 3 8 3t8-3M385 26.500q0 3 8 3t8-3" fill="none" stroke="#b88a00" stroke-width=".9"/>
<path d="M392 5.500h7v8h-7z" fill="#6e6e6e"/><path d="M399 5.500h8q6 1 6.500 9l-3.500-.5q-.5-4-4-4.500h-7z" fill="#8c8c8c"/><path d="M399.500 5.500h3.500v8.500h-3.500z" fill="#555"/>
<path d="M400 14h4v8h-4z" fill="#c9c9c9" stroke="#777" stroke-width=".5"/><path d="M398.500 22h7.500v13.500h-7.500z" fill="#2586c8" stroke="#155a8e" stroke-width=".6"/>
<path d="M406.500 14.500q1.500-3 3 0v4h-3zM407.300 18.500h1.500v8h-1.500z" fill="#9ec2ea" stroke="#5a86ba" stroke-width=".4"/><path d="M405.500 26.500h5.500v9h-5.500z" fill="#35a0dc" stroke="#155a8e" stroke-width=".6"/><path d="M406.800 29.500h3M406.800 32h3" stroke="#155a8e" stroke-width=".8"/>
<!-- B4A -->
<rect x="445" y="4" width="32" height="32" fill="#fff"/>
<path d="M446 29q14 4 30-5v6q-14 4-30 1z" fill="#e9eeee"/>
<text x="447" y="27" font-family="Liberation Sans, sans-serif" font-size="17" fill="#2ecfc4" fill-opacity=".85" textLength="26.500" lengthAdjust="spacingAndGlyphs">B4A</text>
<!-- Notepad++ -->
<path d="M508.500 4.500h19l5.500 5.500v25.500h-24.500z" fill="url(#npp)" stroke="#3a3a3a" stroke-width=".9"/>
<path d="M527.500 4.500v5.500h5.500z" fill="#ddd" stroke="#3a3a3a" stroke-width=".6"/>
<path d="M510 8h16M510 10h16M510 12h22M510 14h22" stroke="#b8c4d0" stroke-width=".5"/>
<path d="M509.500 5.500h17" stroke="#555" stroke-width="1" stroke-dasharray="1 1"/>
<path d="M514.300 23.500v-8.500q0-2 1.800-2t1.800 2v8.500" fill="#ddd" stroke="#111" stroke-width="1.200"/>
<text x="518.800" y="22.500" font-family="Liberation Sans, sans-serif" font-weight="bold" font-size="9" fill="#111" letter-spacing="-1">++</text>
<path d="M536.500 7.500l2 1.200l-12.500 20l-2.300 1.800l.3-3z" fill="#f0a818" stroke="#a86a08" stroke-width=".5"/><path d="M536 5.500l3 1.800l-.8 1.500l-2.800-1.700z" fill="#d8283a"/><path d="M523.700 30.500l.3-3l2 1.200z" fill="#3a2a1a"/>
<!-- Chrome -->
<g id="chrome"><circle cx="585" cy="20" r="14.800" fill="#fcc52a"/>
<path id="csec" d="M572.180 12.600A14.800 14.800 0 0 1 597.820 12.600L585 13.100A6.900 6.900 0 0 0 579.020 23.450z" fill="#e0493a"/>
<path d="M572.180 12.600A14.800 14.800 0 0 1 597.820 12.600L585 13.100A6.900 6.900 0 0 0 579.020 23.450z" fill="#1ea362" transform="rotate(-120 585 20)"/>
<circle cx="585" cy="20" r="6.900" fill="#fff"/><circle cx="585" cy="20" r="5.400" fill="#4a8af4"/></g>
<use href="#chrome" x="62" y="0"/>
<!-- ninja -->
<path d="M651 24.500q4-3 8 0l1 5l2.500-1.500v4l-1.500 1v3.500h-10.500v-4z" fill="#141414"/><rect x="651.800" y="27" width="6" height="1.700" fill="#e8883a"/><rect x="653" y="27.300" width="1" height="1" fill="#111"/><rect x="655.500" y="27.300" width="1" height="1" fill="#111"/>
</svg>
<svg style="left:1700px;top:1040px" width="130" height="40" viewBox="0 0 130 40">
<path d="M9 23.200h8.500l-4.250-4.400z" fill="#fff"/>
<!-- flag -->
<path d="M31 13.500v15" stroke="#fff" stroke-width="1.600"/><path d="M31 13.500v15" stroke="#1d2b3a" stroke-width=".4" transform="translate(-1.100 0)"/>
<path d="M32.500 14.500q3-1.500 6 .5t6.500 0l-1.500 6q-3 1.500-5.500 0t-5.500 0z" fill="#fff" stroke="#2a3a4c" stroke-width=".5"/>
<!-- power -->
<rect x="55.500" y="15" width="9" height="13" rx="1" fill="#fff" stroke="#2a3a4c" stroke-width=".6"/><rect x="57.500" y="13.500" width="5" height="2" fill="#fff" stroke="#2a3a4c" stroke-width=".4"/><rect x="57" y="17" width="6" height="9" fill="#3c5876"/>
<path d="M61.500 14v3h-1v4q0 2.500 3 2.500v4h1.600v-4q3 0 3-2.500v-4h-1v-3h-1.400v3h-2.800v-3z" fill="#fff" stroke="#2a3a4c" stroke-width=".5"/>
<!-- signal -->
<g fill="#fff" stroke="#2a3a4c" stroke-width=".4"><rect x="78.500" y="24" width="2" height="2.500"/><rect x="81.500" y="22" width="2" height="4.500"/><rect x="84.500" y="20" width="2" height="6.500"/><rect x="87.500" y="17.500" width="2" height="9"/><rect x="90.500" y="15" width="2" height="11.500"/></g>
<!-- speaker -->
<path d="M103 18.500h3l4.500-4.500v14l-4.500-4.500h-3z" fill="#fff" stroke="#2a3a4c" stroke-width=".5"/><path d="M108.500 15.500v11" stroke="#9aa8b6" stroke-width="1"/>
<circle cx="113.500" cy="24.500" r="4" fill="#fff" stroke="#e01010" stroke-width="1.800"/><path d="M111 22l5 5" stroke="#e01010" stroke-width="1.800"/>
</svg>
<div class="t" style="left:1681px;top:1050px;color:#f4f8fb;letter-spacing:-.3px">IT</div>
<div class="t" style="left:1851px;top:1045px;color:#fff;letter-spacing:-.5px">15:48</div>
<div class="t" style="left:1836px;top:1062px;color:#fff;letter-spacing:-.3px">24/01/2017</div>
<div class="a" style="left:1905px;top:1041px;width:15px;height:39px;border-left:1px solid #16304a;background:linear-gradient(90deg,rgba(255,255,255,.45) 0,rgba(255,255,255,.45) 1px,rgba(255,255,255,.18) 1px,rgba(255,255,255,.1) 100%)"></div>
</div>
</body>
</html>
